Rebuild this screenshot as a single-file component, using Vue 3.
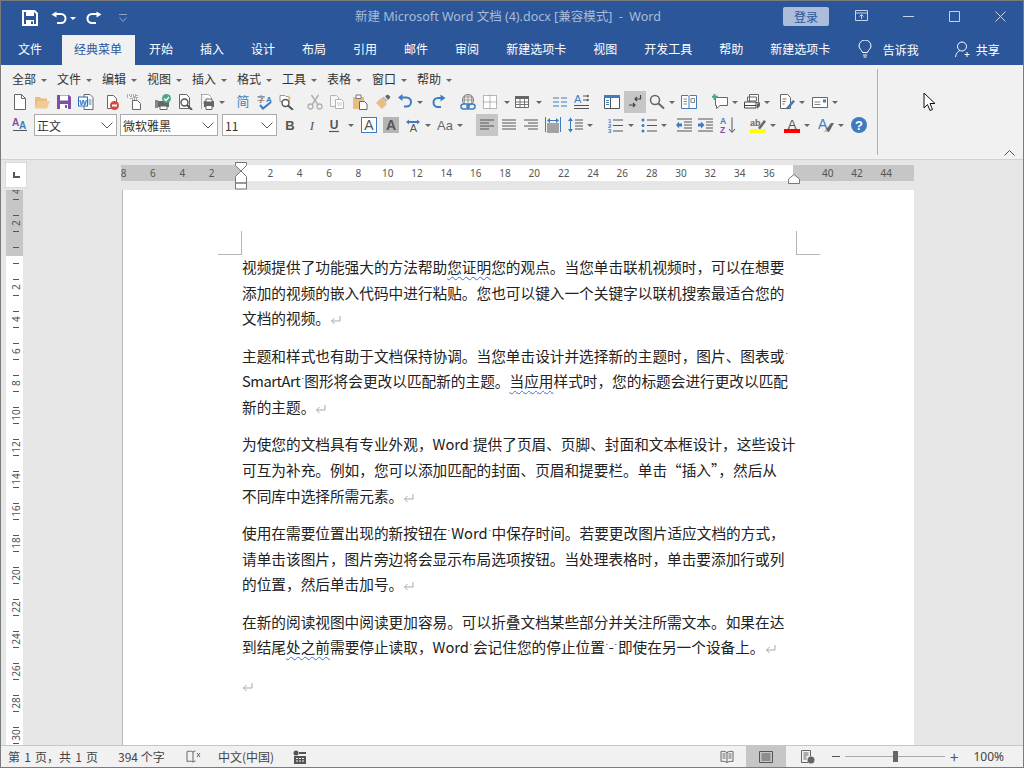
<template>
  <div class="app">
    <header class="titlebar">
      <div class="qat">
        <svg class="qat-save" width="16" height="16" viewBox="0 0 16 16">
          <path d="M1 1h11.500L15 3.500V15H1z" fill="none" stroke="#fff" stroke-width="2" />
          <path d="M4 1h8v5H4zM4 10h8v5H4z" fill="#fff" />
          <path d="M9 11.500h2V14H9z" fill="#2b579a" />
        </svg>
        <svg class="qat-undo" width="17" height="15" viewBox="0 0 17 15">
          <path d="M5 3h6a4.500 4.500 0 0 1 0 9H7" fill="none" stroke="#fff" stroke-width="2" />
          <path d="M6.500 .5v6L1.500 3.500z" fill="#fff" />
        </svg>
        <i class="qat-caret"></i>
        <svg class="qat-redo" width="17" height="15" viewBox="0 0 17 15">
          <path d="M12 3H6a4.500 4.500 0 0 0 0 9h4" fill="none" stroke="#fff" stroke-width="2" />
          <path d="M10.500 .5v6l5-3z" fill="#fff" />
        </svg>
        <svg class="qat-more" width="10" height="9" viewBox="0 0 10 9">
          <path d="M1 .5h8M1.500 3.500 5 7.500l3.500-4" fill="none" stroke="#8ea5c9" />
        </svg>
      </div>
      <div class="doc-title">新建 Microsoft Word 文档 (4).docx [兼容模式]&nbsp;&nbsp;-&nbsp;&nbsp;Word</div>
      <button class="login">登录</button>
      <div class="win-btns">
        <svg width="13" height="12" viewBox="0 0 13 12">
          <path d="M.5.5h12v10H.5zM.5 3h12M6.500 9V4.500M4.500 6.500l2-2 2 2" fill="none" stroke="#c7d2e5" />
        </svg>
        <svg width="11" height="11" viewBox="0 0 11 11"><path d="M0 5.500h11" stroke="#c7d2e5" /></svg>
        <svg width="11" height="11" viewBox="0 0 11 11"><path d="M.5.5h10v10H.5z" fill="none" stroke="#c7d2e5" /></svg>
        <svg width="11" height="11" viewBox="0 0 11 11"><path d="M.5.5l10 10M10.500.5l-10 10" stroke="#c7d2e5" /></svg>
      </div>
    </header>

    <nav class="tabs">
      <span
        v-for="tab in tabs"
        :key="tab.id"
        class="tab"
        :class="{ active: tab.active, file: tab.id === 0 }"
      >{{ tab.label }}</span>
      <svg class="bulb" width="14" height="18" viewBox="0 0 14 18">
        <path d="M4.500 12.500C4 10 1 9 1 6a6 6 0 0 1 12 0c0 3-3 4-3.500 6.500zM5 15h4M5.500 17h3" fill="none" stroke="#fff" />
      </svg>
      <span class="tell">告诉我</span>
      <svg class="person" width="17" height="17" viewBox="0 0 17 17">
        <circle cx="7" cy="5.500" r="4.500" fill="none" stroke="#fff" />
        <path d="M.5 16c.5-3.500 2.500-6 4.500-6.500M12 11v5M9.500 13.500h5" fill="none" stroke="#fff" />
      </svg>
      <span class="share">共享</span>
    </nav>

    <section class="ribbon">
      <div class="ribbon-main">
        <div class="menu-row">
          <span v-for="m in menus" :key="m" class="menu-item">{{ m }}<i class="caret"></i></span>
        </div>
        <div class="tool-row">
          <template v-for="(t, idx) in toolsTop" :key="idx">
            <i v-if="t.name === 'caret'" class="caret-slot" :style="gapStyle(t)"><i class="caret"></i></i>
            <span v-else class="tool" :class="{ on: t.on }" :style="gapStyle(t)">
              <svg width="16" height="16" viewBox="0 0 16 16" v-html="icons[t.name]"></svg>
            </span>
          </template>
        </div>
        <div class="tool-row">
          <span class="tool"><svg width="16" height="16" viewBox="0 0 16 16" v-html="icons.styles"></svg></span>
          <div class="combo style-combo"><span>正文</span><svg width="12" height="7" viewBox="0 0 12 7"><path d="M.5.5 6 6l5.500-5.500" fill="none" stroke="#555" /></svg></div>
          <div class="combo font-combo"><span>微软雅黑</span><svg width="12" height="7" viewBox="0 0 12 7"><path d="M.5.5 6 6l5.500-5.500" fill="none" stroke="#555" /></svg></div>
          <div class="combo size-combo"><span>11</span><svg width="12" height="7" viewBox="0 0 12 7"><path d="M.5.5 6 6l5.500-5.500" fill="none" stroke="#555" /></svg></div>
          <template v-for="(t, idx) in toolsBottom" :key="idx">
            <i v-if="t.name === 'caret'" class="caret-slot" :style="gapStyle(t)"><i class="caret"></i></i>
            <span v-else class="tool" :class="{ on: t.on }" :style="gapStyle(t)">
              <svg width="16" height="16" viewBox="0 0 16 16" v-html="icons[t.name]"></svg>
            </span>
          </template>
        </div>
      </div>
      <svg class="collapse" width="11" height="6" viewBox="0 0 11 6"><path d="M.5 5.500l5-5 5 5" fill="none" stroke="#555" /></svg>
      <svg class="cursor" width="13" height="20" viewBox="0 0 13 20">
        <path d="M1 1v15l3.500-3.500 2.500 6 2.500-1-2.500-6H12z" fill="#fff" stroke="#111" />
      </svg>
    </section>

    <main class="workspace">
      <div class="ruler-bar">
        <div class="corner"><i></i></div>
        <div class="h-ruler">
          <div class="h-gray left"></div>
          <div class="h-white"></div>
          <div class="h-gray right"></div>
          <span
            v-for="n in hLabels"
            :key="n.pos"
            class="h-num"
            :style="{ left: n.pos + 'px' }"
          >{{ n.text }}</span>
          <svg class="hourglass" width="12" height="28" viewBox="0 0 12 28">
            <path d="M.5.500h11v3L6 9 .5 3.500zM6 9l5.500 5.500V21H.5v-6.500zM.5 21h11v6H.5z" fill="#fff" stroke="#777" />
          </svg>
          <svg class="right-mark" width="12" height="10" viewBox="0 0 12 10">
            <path d="M6 .5l5.500 4.500v4.500H.5V5z" fill="#fff" stroke="#777" />
          </svg>
        </div>
      </div>

      <div class="doc-area">
        <div class="v-ruler">
          <div class="v-gray"></div>
          <i v-for="d in vDashes" :key="d" class="v-dash" :style="{ top: d + 'px' }"></i>
          <span
            v-for="n in vLabels"
            :key="n.pos"
            class="v-num"
            :style="{ top: n.pos + 'px' }"
          >{{ n.text }}</span>
        </div>

        <article class="page">
          <i class="crop tl"></i>
          <i class="crop tr"></i>
          <p>
            <span class="line">视频提供了功能强大的方法帮助<span class="squiggle">您证明</span>您的观点。当您单击联机视频时，可以在想要</span>
            <span class="line">添加的视频的嵌入代码中进行粘贴。您也可以键入一个关键字以联机搜索最适合您的</span>
            <span class="line">文档的视频。<svg class="ret" width="11" height="10" viewBox="0 0 11 10"><path d="M10 1v5H1.500M4.500 3 1.500 6l3 3" fill="none" stroke="#a9a9a9" /></svg></span>
          </p>
          <p>
            <span class="line">主题和样式也有助于文档保持协调。当您单击设计并选择新的主题时，图片、图表或<i class="sp"></i></span>
            <span class="line"><span class="tight">SmartArt</span><i class="sp"></i>图形将会更改以匹配新的主题。<span class="squiggle">当应用</span>样式时，您的标题会进行更改以匹配</span>
            <span class="line">新的主题。<svg class="ret" width="11" height="10" viewBox="0 0 11 10"><path d="M10 1v5H1.500M4.500 3 1.500 6l3 3" fill="none" stroke="#a9a9a9" /></svg></span>
          </p>
          <p>
            <span class="line">为使您的文档具有专业外观，Word<i class="sp"></i>提供了页眉、页脚、封面和文本框设计，这些设计</span>
            <span class="line">可互为补充。例如，您可以添加匹配的封面、页眉和提要栏。单击“插入”，然后从</span>
            <span class="line">不同库中选择所需元素。<svg class="ret" width="11" height="10" viewBox="0 0 11 10"><path d="M10 1v5H1.500M4.500 3 1.500 6l3 3" fill="none" stroke="#a9a9a9" /></svg></span>
          </p>
          <p>
            <span class="line">使用在需要位置出现的新按钮在<i class="sp"></i>Word<i class="sp"></i>中保存时间。若要更改图片适应文档的方式，</span>
            <span class="line">请单击该图片，图片旁边将会显示布局选项按钮。当处理表格时，单击要添加行或列</span>
            <span class="line">的位置，然后单击加号。<svg class="ret" width="11" height="10" viewBox="0 0 11 10"><path d="M10 1v5H1.500M4.500 3 1.500 6l3 3" fill="none" stroke="#a9a9a9" /></svg></span>
          </p>
          <p>
            <span class="line">在新的阅读视图中阅读更加容易。可以折叠文档某些部分并关注所需文本。如果在达</span>
            <span class="line">到结尾<span class="squiggle">处之前</span>需要停止读取，Word<i class="sp"></i>会记住您的停止位置<i class="sp"></i>-<i class="sp"></i>即使在另一个设备上。<svg class="ret" width="11" height="10" viewBox="0 0 11 10"><path d="M10 1v5H1.500M4.500 3 1.500 6l3 3" fill="none" stroke="#a9a9a9" /></svg></span>
          </p>
          <p>
            <span class="line"><svg class="ret" width="11" height="10" viewBox="0 0 11 10"><path d="M10 1v5H1.500M4.500 3 1.500 6l3 3" fill="none" stroke="#a9a9a9" /></svg></span>
          </p>
        </article>
      </div>
    </main>

    <footer class="statusbar">
      <span class="st-page">第 1 页，共 1 页</span>
      <span class="st-words">394 个字</span>
      <svg class="st-proof" width="15" height="14" viewBox="0 0 15 14">
        <path d="M7 2C5.500 1 3 1 1 1.500v10c2-.5 4.500-.5 6 .5 .7-.5 1.500-.8 2.500-1M7 2v10M7 2c.7-.5 1.500-.8 2.500-1M11 3l3 4M14 3l-3 4" fill="none" stroke="#666" />
      </svg>
      <span class="st-lang">中文(中国)</span>
      <svg class="st-macro" width="13" height="14" viewBox="0 0 13 14">
        <circle cx="3" cy="3" r="2.500" fill="#555" />
        <path d="M6 2h7v2H6zM1 6h12v8H1z" fill="#555" />
        <path d="M3 8h2v1H3zM6 8h2v1H6zM9 8h2v1H9zM3 10.500h2v1H3zM6 10.500h2v1H6zM9 10.500h2v1H9z" fill="#f1f1f1" />
      </svg>
      <div class="st-right">
        <svg width="14" height="14" viewBox="0 0 14 14">
          <path d="M7 2.500C5.500 1.500 3 1 1 1.500v10c2-.5 4.500 0 6 1 1.500-1 4-1.500 6-1v-10c-2-.5-4.500 0-6 1zM7 2.500v10M2.500 4h3M2.500 6h3M2.500 8h3M8.500 4h3M8.500 6h3M8.500 8h3" fill="none" stroke="#666" />
        </svg>
        <span class="view-on">
          <svg width="14" height="12" viewBox="0 0 14 12">
            <path d="M.5.500h13v11H.5zM2.500 3h9M2.500 5h9M2.500 7h9M2.500 9h9" fill="none" stroke="#555" />
          </svg>
        </span>
        <svg class="view-web" width="15" height="14" viewBox="0 0 15 14">
          <path d="M8 12.500H1.500V.5h9v6M3.500 3h5M3.500 5h5M3.500 7h3M3.500 9h3" fill="none" stroke="#666" />
          <circle cx="11" cy="10" r="3.500" fill="#666" />
        </svg>
        <span class="zoom-minus"></span>
        <div class="slider"><i></i></div>
        <span class="zoom-plus">+</span>
        <span class="zoom-val">100%</span>
      </div>
    </footer>
  </div>
</template>

<script setup>
const tabs = ['文件', '经典菜单', '开始', '插入', '设计', '布局', '引用', '邮件', '审阅', '新建选项卡', '视图', '开发工具', '帮助', '新建选项卡'].map(
  (label, id) => ({ id, label, active: id === 1 }),
)

const menus = ['全部', '文件', '编辑', '视图', '插入', '格式', '工具', '表格', '窗口', '帮助']

// "name:gap", a trailing * marks the pressed button
function parseTools(list) {
  return list.map((entry) => {
    const on = entry.endsWith('*')
    const [name, gap] = entry.replace('*', '').split(':')
    return { name, gap: Number(gap || 0), on }
  })
}

function gapStyle(t) {
  return t.gap ? { marginLeft: t.gap + 'px' } : null
}

const toolsTop = parseTools([
  'new', 'open', 'save', 'word', 'perm:4', 'sheet', 'printok:7', 'preview', 'print', 'caret',
  'simp:6', 'spell', 'research', 'cut:6', 'copy', 'paste:1', 'painter:1', 'undo', 'caret', 'redo:4',
  'link:7', 'border', 'caret:2', 'table', 'caret:2', 'columns:6', 'textdir', 'docmap:8', 'para:1*',
  'search', 'caret', 'book:2', 'comment:9', 'caret', 'pages:2', 'caret', 'track:5', 'caret', 'envelope:3', 'caret',
])

const toolsBottom = parseTools([
  'bold:2', 'italic', 'under', 'caret:2', 'fontbox:3', 'shade', 'phon', 'caret', 'case:2', 'caret',
  'left:12*', 'center', 'right', 'dist', 'spacing', 'caret', 'num:11', 'caret', 'bullets:3', 'caret',
  'outdent:5', 'indent', 'sort', 'hl:8', 'caret', 'color:4', 'caret', 'fstyle:4', 'caret', 'help:3',
])

const hLabels = []
for (const n of [8, 6, 4, 2]) hLabels.push({ text: n, pos: 120 - n * 14.667 })
for (let n = 2; n <= 44; n += 2) {
  if (n !== 38) hLabels.push({ text: n, pos: 120 + n * 14.667 })
}

const vLabels = [{ text: 4, pos: 1 }, { text: 2, pos: 33 }]
for (let n = 2; n <= 30; n += 2) vLabels.push({ text: n, pos: 97 + (n - 2) * 16 })

const vDashes = []
for (let y = 9; y < 555; y += 16) vDashes.push(y)

const BLUE = '#3f7cbf'
const TAN = '#e9bd7f'
const SANS = 'font-family="Liberation Sans, sans-serif"'

const icons = {
  new: '<path d="M2.500.5h7l4 4v11h-11z" fill="#fff" stroke="#666"/><path d="M9.500.5v4h4" fill="none" stroke="#666"/>',
  open: `<path d="M1 3h5l1 1.500h6V7H4.500L1 14z" fill="${TAN}"/><path d="M4 7h12l-3 7.500H.5z" fill="#f0cc94"/>`,
  save: '<path d="M1 1h12l2 2v12H1z" fill="#7e4fa6"/><path d="M4 1.500h8v5H4zM4 10h8v5H4z" fill="#fff"/><path d="M9 11h2v3H9z" fill="#7e4fa6"/>',
  word: `<path d="M6 .5h6l3 3v12H6z" fill="#fff" stroke="#666"/><rect x=".5" y="3" width="9" height="9" fill="#fff" stroke="#2a6bbd"/><text x="5" y="10.500" text-anchor="middle" font-size="8" font-weight="700" fill="#2a6bbd" ${SANS}>W</text><path d="M10.500 6h3M10.500 8h3M10.500 10h3" stroke="#3f7cbf"/>`,
  perm: '<path d="M3.500 1.500h6l3 3v10h-9z" fill="#fff" stroke="#666"/><circle cx="10.500" cy="11.500" r="4.500" fill="#d24a3a"/><path d="M8 10.500h5v2H8z" fill="#fff"/>',
  sheet: '<path d="M1 1h3M1 3h1M5 1h6v4H5z" fill="none" stroke="#666" stroke-dasharray="1 1"/><path d="M6.500 6.500h5l3 3v6h-8z" fill="#fff" stroke="#666"/><path d="M7 3h3" stroke="#3f7cbf"/>',
  printok: '<path d="M3 7h11v6H3z" fill="#666"/><path d="M0 6h3v8H0z" fill="#888"/><path d="M5 12h7v3.500H5z" fill="#fff" stroke="#666"/><circle cx="11.500" cy="4.500" r="4.500" fill="#4fa58c"/><path d="M9 4.500l2 2 3-3.500" fill="none" stroke="#fff" stroke-width="1.200"/>',
  preview: '<path d="M2.500.5h7l3 3v11h-10z" fill="#fff" stroke="#666"/><circle cx="7.500" cy="8.500" r="3.500" fill="#fff" stroke="#555" stroke-width="1.400"/><path d="M10 11l5 5" stroke="#555" stroke-width="2"/>',
  print: '<path d="M2.500.5h7l3 3V7M2.500.5V15" fill="#fff" stroke="#666" stroke-dasharray="1 1"/><path d="M5 7h10v6H5z" fill="#666"/><path d="M7 5h6v3H7z" fill="#fff" stroke="#666"/><path d="M7 11.500h6v4H7z" fill="#fff" stroke="#666"/><circle cx="5" cy="9" r=".7" fill="#3f7cbf"/>',
  simp: '<text x="8" y="12" text-anchor="middle" font-size="13" fill="#3f7cbf" font-family="Noto Sans CJK SC, sans-serif">简</text>',
  spell: `<text x="0" y="8" font-size="8" fill="#555" font-family="Noto Sans CJK SC, sans-serif">字</text><text x="9" y="8" font-size="8" font-weight="700" fill="#3f7cbf" ${SANS}>A</text><path d="M3 11l3 3.500L14 8" fill="none" stroke="#3f7cbf" stroke-width="2"/>`,
  research: `<path d="M1 1.500h5l1 1 3 0 0 5H1z" fill="#fff" stroke="#999"/><path d="M9 1l3 3-2 2z" fill="${TAN}"/><circle cx="6.500" cy="9" r="3.500" fill="#fff" stroke="#555" stroke-width="1.400"/><path d="M9 11.500l5 4.500" stroke="#555" stroke-width="2"/>`,
  cut: '<path d="M4.500 1l6 9M11.500 1l-6 9" stroke="#b0b0b0" stroke-width="1.500" fill="none"/><circle cx="3.500" cy="12.500" r="2.500" fill="none" stroke="#b0b0b0" stroke-width="1.300"/><circle cx="12.500" cy="12.500" r="2.500" fill="none" stroke="#b0b0b0" stroke-width="1.300"/>',
  copy: '<path d="M1.500 1.500h6l2 2v9h-8z" fill="#f6f6f6" stroke="#b5b5b5"/><path d="M6.500 5.500h6l2 2v7h-8z" fill="#fff" stroke="#b5b5b5"/><path d="M8 9h5M8 11h5" stroke="#c8c8c8"/>',
  paste: `<path d="M1 3h11v12H1z" fill="${TAN}"/><path d="M4 1h5v3.500H4z" fill="#fff" stroke="#777"/><path d="M7.500 7.500h5l2.500 2.500v5.500H7.500z" fill="#fff" stroke="#666"/>`,
  painter: `<path d="M1 9l5-5 6 6-5 5z" fill="${TAN}"/><path d="M6.500 4.500l2-2 4 4-1.500 2z" fill="#bbb"/><path d="M10 2l3-1.500 2.500 2.500-2.500 3z" fill="#666"/>`,
  undo: `<path d="M4 3.500h5.500a4.500 4.500 0 0 1 0 9H7" fill="none" stroke="${BLUE}" stroke-width="2"/><path d="M5.500 0v7L1 3.500z" fill="${BLUE}"/>`,
  redo: `<path d="M11 4H7a4.500 4.500 0 0 0 0 9h3" fill="none" stroke="${BLUE}" stroke-width="2"/><path d="M9.500 .5v7l5-3.500z" fill="${BLUE}"/>`,
  link: `<circle cx="8" cy="6" r="5.500" fill="none" stroke="#777"/><path d="M2.500 6h11M8 .5v11M3.500 3h9M5 1.500c-1 3-1 6 0 9M11 1.500c1 3 1 6 0 9" fill="none" stroke="#777" stroke-width=".7"/><rect x="1" y="10" width="8" height="5" rx="2.500" fill="#f1f1f1" stroke="${BLUE}" stroke-width="1.500"/><rect x="7" y="10" width="8" height="5" rx="2.500" fill="none" stroke="${BLUE}" stroke-width="1.500"/>`,
  border: '<path d="M1.500 1.500h13v13h-13zM8 1.500v13M1.500 8h13" fill="#fff" stroke="#777" stroke-dasharray="1 1"/>',
  table: '<path d="M1.500 2.500h13v11h-13z" fill="#fff" stroke="#666"/><path d="M1 2h14v3H1z" fill="#666"/><path d="M6 5v8M10.500 5v8M1.500 8h13M1.500 10.500h13" stroke="#777"/>',
  columns: `<path d="M1 4h6M1 8h6M1 12h6M9 4h6M9 8h6M9 12h6" stroke="${BLUE}" stroke-width="1.200"/>`,
  textdir: `<text x="0" y="9" font-size="11" fill="${BLUE}" ${SANS}>A</text><path d="M0 11.500h15M0 14.500h15" stroke="#555"/><path d="M9 2h6M9 6h6" stroke="#555"/><path d="M13 .5l2 1.500-2 1.500zM13 4.500l2 1.500-2 1.500z" fill="#555"/>`,
  docmap: `<path d="M.5 1.500h15v13H.5z" fill="#fff" stroke="#555"/><path d="M0 1h16v3H0z" fill="${BLUE}"/><path d="M6.500 4v10" stroke="#555"/><path d="M2 6.500h3M2 8.500h3M2 10.500h3" stroke="${BLUE}"/>`,
  para: '<path d="M13.500 1v4H8M10 3 8 5l2 2M2 11h6M6 9l2 2-2 2" fill="none" stroke="#444" stroke-width="1.200"/>',
  search: '<circle cx="6" cy="6" r="4.500" fill="none" stroke="#666" stroke-width="1.500"/><path d="M9.500 9.500l5.500 5" stroke="#666" stroke-width="2"/>',
  book: `<path d="M.5 1.500h6.500l1 1 1-1h6.500v13H.5z" fill="#fff" stroke="${BLUE}"/><path d="M8 2.500v12" stroke="${BLUE}"/><path d="M2.500 5h3.500M2.500 7.500h3.500M2.500 10h3.500" stroke="#888"/><path d="M10 4.500h3.500v4H10z" fill="none" stroke="#888"/>`,
  comment: '<path d="M3.500 3.500h12v8H8l-3.500 3v-3H3.500z" fill="#fff" stroke="#666"/><path d="M2.500 0v6M0 2.800h6" stroke="#4fa58c" stroke-width="2"/>',
  pages: '<path d="M5.500 .5h9v8h-9zM3.500 3h9v4h-9z" fill="#fff" stroke="#666"/><path d="M.5 8h11.500v6H.5z" fill="#fff" stroke="#444"/><path d="M.5 11.500h11.500" stroke="#444"/><path d="M13 10l3-2v4l-3 3z" fill="#666"/>',
  track: `<path d="M1.500 .5h7l3 3v11h-10z" fill="#fff" stroke="#666"/><path d="M3.500 5h4M3.500 7.500h3M3.500 10h2" stroke="#d0553e"/><path d="M7 14l7-8 2 1.500-7 8z" fill="${BLUE}"/>`,
  envelope: `<path d="M.5 3.500h15v10H.5z" fill="#fff" stroke="#666"/><path d="M2.500 8h6M2.500 10.500h6" stroke="#888"/><rect x="11" y="5.500" width="3" height="3" fill="${BLUE}"/>`,
  styles: `<text x="0" y="9" font-size="10" font-weight="700" fill="#7e4fa6" ${SANS}>A</text><text x="7" y="12" font-size="10" font-weight="700" fill="${BLUE}" ${SANS}>A</text><path d="M1 13.500h14" stroke="#555"/>`,
  bold: `<text x="8" y="13" text-anchor="middle" font-size="13" font-weight="700" fill="#555" ${SANS}>B</text>`,
  italic: '<text x="8" y="13" text-anchor="middle" font-size="13" font-style="italic" fill="#555" font-family="Liberation Serif, serif">I</text>',
  under: `<text x="8" y="12" text-anchor="middle" font-size="12" font-weight="700" fill="#555" ${SANS}>U</text><path d="M3 14.500h10" stroke="#555" stroke-width="1.200"/>`,
  fontbox: `<rect x=".5" y=".5" width="15" height="15" fill="#fff" stroke="${BLUE}"/><text x="8" y="13" text-anchor="middle" font-size="14" fill="#555" ${SANS}>A</text>`,
  shade: `<rect x="0" y="0" width="16" height="16" fill="#b5b5b5"/><text x="8" y="13" text-anchor="middle" font-size="14" font-weight="700" fill="#555" ${SANS}>A</text>`,
  phon: `<text x="8.500" y="15" text-anchor="middle" font-size="11" fill="#555" ${SANS}>A</text><path d="M1 5l3-2.500V4c3 0 5 0 8 0V2.500L15 5l-3 2.500V6H4v1.500z" fill="${BLUE}"/>`,
  case: `<text x="8" y="13" text-anchor="middle" font-size="13" fill="#666" ${SANS}>Aa</text>`,
  left: '<path d="M1 3h14M1 6h9M1 9h14M1 12h9" stroke="#555"/>',
  center: '<path d="M1 3h14M1 6h14M1 9h14M1 12h14" stroke="#555"/>',
  right: '<path d="M1 3h14M5 6h10M1 9h14M5 12h10" stroke="#555"/>',
  dist: `<path d="M.5 0v15M15.500 0v15" stroke="${BLUE}"/><path d="M3 3.500h10" stroke="${BLUE}"/><path d="M5 1v5L2 3.500zM11 1v5l3-2.500z" fill="${BLUE}"/><path d="M2 7h12M2 9h12M2 11h12M2 13h12M2 15h12" stroke="#555"/>`,
  spacing: `<path d="M3.500 2v12" stroke="${BLUE}"/><path d="M1 4l2.500-3.500L6 4zM1 12l2.500 3.500L6 12z" fill="${BLUE}"/><path d="M8 3h8M8 6h8M8 9h8M8 12h8" stroke="#555"/>`,
  num: `<text x="0" y="5.500" font-size="6" font-weight="700" fill="${BLUE}" ${SANS}>1</text><text x="0" y="11" font-size="6" font-weight="700" fill="${BLUE}" ${SANS}>2</text><text x="0" y="16" font-size="6" font-weight="700" fill="${BLUE}" ${SANS}>3</text><path d="M5 3h10M5 8.500h10M5 14h10" stroke="#555"/>`,
  bullets: `<circle cx="2" cy="3" r="1.500" fill="${BLUE}"/><circle cx="2" cy="8.500" r="1.500" fill="${BLUE}"/><circle cx="2" cy="14" r="1.500" fill="${BLUE}"/><path d="M6 3h10M6 8.500h10M6 14h10" stroke="#555"/>`,
  outdent: `<path d="M1 2h15M8 5h8M8 8h8M8 11h8M1 14h15" stroke="#555"/><path d="M6 6.500H3v-2L0 8l3 3.500v-2h3z" fill="${BLUE}"/>`,
  indent: `<path d="M0 2h15M8 5h7M8 8h7M8 11h7M0 14h15" stroke="#555"/><path d="M0 6.500h3v-2L6.500 8 3 11.500v-2H0z" fill="${BLUE}"/>`,
  sort: `<text x="0" y="7" font-size="8.500" font-weight="700" fill="${BLUE}" ${SANS}>A</text><text x="0" y="15.500" font-size="8.500" font-weight="700" fill="#7e4fa6" ${SANS}>Z</text><path d="M12 .5V15M9 12l3 3.500 3-3.500" fill="none" stroke="#555"/>`,
  hl: `<text x="0" y="8.500" font-size="9" font-weight="700" fill="#666" ${SANS}>ab</text><path d="M8 11l6-8 2 1.500-6 8z" fill="#666"/><rect x="0" y="12" width="16" height="4" fill="#ff0"/>`,
  color: `<text x="8" y="11.500" text-anchor="middle" font-size="13" fill="#555" ${SANS}>A</text><rect x="0" y="12" width="16" height="4" fill="#f00"/>`,
  fstyle: `<text x="0" y="12" font-size="14" fill="${BLUE}" ${SANS}>A</text><path d="M7 14l6-8 3 0-5 9z" fill="#666"/><path d="M5 15.500l3-3 2 2z" fill="${TAN}"/>`,
  help: `<circle cx="8" cy="8" r="8" fill="${BLUE}"/><text x="8" y="12.500" text-anchor="middle" font-size="13" font-weight="700" fill="#fff" ${SANS}>?</text>`,
}
</script>

<style scoped>
.app {
  position: relative;
  width: 1024px;
  height: 768px;
  box-sizing: border-box;
  border: 1px solid #7b7b7b;
  display: flex;
  flex-direction: column;
  overflow: hidden;
  font-family: "Noto Sans CJK SC", "Noto Sans", sans-serif;
  color: #444;
}

/* Title bar */
.titlebar {
  height: 34px;
  flex: none;
  background: #2b579a;
  display: flex;
  align-items: center;
}

.qat {
  width: 354px;
  display: flex;
  align-items: center;
  padding-left: 21px;
  box-sizing: border-box;
}

.qat-undo {
  margin-left: 12px;
}

.qat-caret {
  width: 0;
  height: 0;
  margin-left: 3px;
  border: 3px solid transparent;
  border-top-color: #fff;
  border-bottom: none;
}

.qat-redo {
  margin-left: 10px;
}

.qat-more {
  margin-left: 15px;
}

.doc-title {
  width: 428px;
  margin-top: -6px;
  color: #a9bbd7;
  font-family: "Noto Sans", "Noto Sans CJK SC", sans-serif;
  font-size: 12.5px;
  white-space: nowrap;
}

.login {
  width: 46px;
  height: 19px;
  margin-top: -3px;
  padding: 0;
  border: none;
  border-radius: 2px;
  background: #abbdd9;
  color: #2b579a;
  font: 12px "Noto Sans CJK SC", sans-serif;
}

.win-btns {
  display: flex;
  align-items: center;
  gap: 35px;
  margin-left: 26px;
  margin-top: -4px;
}

/* Tabs */
.tabs {
  height: 30px;
  flex: none;
  background: #2b579a;
  display: flex;
  align-items: center;
  color: #fff;
  font-size: 12px;
  white-space: nowrap;
}

.tab {
  padding: 0 13.5px 2px;
  line-height: 28px;
}

.tab.file {
  margin: 0 6.5px 0 3.5px;
}

.tab.active {
  background: #f1f1f1;
  color: #2b579a;
  padding: 0 12px 2px;
  margin: 0 0.5px 0 0;
  width: 49px;
}

.bulb {
  margin-left: 14px;
  margin-top: -2px;
}

.tell {
  margin-left: 11px;
  margin-top: -2px;
}

.person {
  margin-left: 36px;
  margin-top: -2px;
}

.share {
  margin-left: 4px;
  margin-top: -2px;
}

/* Ribbon */
.ribbon {
  height: 95px;
  flex: none;
  box-sizing: border-box;
  background: #f1f1f1;
  border-bottom: 1px solid #d2d2d2;
  padding-top: 4px;
  position: relative;
}

.ribbon-main {
  width: 877px;
  height: 86px;
  box-sizing: border-box;
  border-right: 1px solid #b1b1b1;
}

.menu-row {
  height: 22px;
  box-sizing: border-box;
  padding: 0 0 4px 11px;
  display: flex;
  align-items: center;
  font-size: 12px;
  color: #333;
}

.menu-item {
  width: 45px;
  flex: none;
  white-space: nowrap;
}

.caret {
  display: inline-block;
  width: 0;
  height: 0;
  margin-left: 5px;
  border: 3px solid transparent;
  border-top-color: #666;
  border-bottom: none;
  vertical-align: middle;
}

.tool-row {
  height: 22px;
  margin-bottom: 1px;
  display: flex;
  align-items: center;
  padding-left: 8px;
}

.tool {
  width: 22px;
  height: 22px;
  flex: none;
  display: flex;
  align-items: center;
  justify-content: center;
}

.tool.on {
  background: #c6c6c6;
}

.caret-slot {
  width: 8px;
  height: 22px;
  flex: none;
  display: flex;
  align-items: center;
  justify-content: center;
}

.caret-slot .caret {
  margin: 0;
}

.combo {
  height: 22px;
  flex: none;
  box-sizing: border-box;
  border: 1px solid #ababab;
  background: #fff;
  display: flex;
  align-items: center;
  justify-content: space-between;
  padding: 0 3px 0 2px;
  font-size: 12px;
  color: #333;
}

.style-combo {
  width: 83px;
  margin-left: 3px;
}

.font-combo {
  width: 98px;
  margin-left: 3px;
}

.size-combo {
  width: 55px;
  margin-left: 4px;
}

.collapse {
  position: absolute;
  right: 8px;
  top: 85px;
}

.cursor {
  position: absolute;
  left: 922px;
  top: 27px;
}

/* Rulers and page */
.workspace {
  flex: 1;
  min-height: 0;
  background: #e6e6e6;
  display: flex;
  flex-direction: column;
}

.ruler-bar {
  height: 30px;
  flex: none;
  display: flex;
}

.corner {
  width: 20px;
  height: 24px;
  margin: 3px 0 0 5px;
  background: #fff;
  outline: 1px dotted #cfcfcf;
  display: flex;
  align-items: center;
  justify-content: center;
  flex: none;
}

.corner i {
  width: 5px;
  height: 4px;
  border-left: 2px solid #555;
  border-bottom: 2px solid #555;
}

.h-ruler {
  position: relative;
  width: 793px;
  height: 16px;
  margin: 5px 0 0 95px;
  display: flex;
  font-family: "Noto Sans", sans-serif;
}

.h-gray {
  background: #c6c6c6;
}

.h-gray.left {
  width: 120px;
}

.h-gray.right {
  width: 121px;
}

.h-white {
  width: 552px;
  background: #fff;
}

.h-num {
  position: absolute;
  top: 0;
  width: 20px;
  margin-left: -10px;
  text-align: center;
  font-size: 10px;
  line-height: 16px;
  color: #555;
}

.hourglass {
  position: absolute;
  left: 114px;
  top: -3px;
}

.right-mark {
  position: absolute;
  left: 667px;
  top: 9px;
}

.doc-area {
  flex: 1;
  min-height: 0;
  display: flex;
}

.v-ruler {
  position: relative;
  width: 17px;
  margin-left: 5px;
  background: #fff;
  overflow: hidden;
  flex: none;
  font-family: "Noto Sans", sans-serif;
}

.v-gray {
  height: 66px;
  background: #c6c6c6;
}

.v-dash {
  position: absolute;
  left: 7px;
  width: 6px;
  height: 1px;
  background: #555;
}

.v-num {
  position: absolute;
  left: 0;
  width: 20px;
  margin: -6px 0 0 0;
  line-height: 12px;
  text-align: center;
  font-size: 10px;
  color: #555;
  transform: rotate(-90deg);
  transform-origin: 10px 6px;
}

.page {
  position: relative;
  width: 792px;
  margin-left: 99px;
  flex: none;
  box-sizing: border-box;
  background: #fff;
  border-left: 1px solid #b9b9b9;
  padding: 64px 0 0 119px;
  overflow: hidden;
  font-size: 14.67px;
  color: #222;
}

.page p {
  margin: 0 0 11.7px;
}

.line {
  display: block;
  height: 25.67px;
  line-height: 25.67px;
  white-space: nowrap;
}

.squiggle {
  text-decoration: underline wavy #3b6fd4;
  text-decoration-thickness: 1px;
  text-underline-offset: 3px;
}

.tight {
  letter-spacing: -0.45px;
}

/* space mark: a small dot, not a character */
.sp {
  display: inline-block;
  width: 4px;
  height: 1px;
  background: linear-gradient(#777, #777) center / 1.5px 1px no-repeat;
  vertical-align: 8px;
}

.ret {
  vertical-align: -1px;
}

.crop {
  position: absolute;
  width: 23px;
  height: 23px;
  top: 41px;
  border-bottom: 1px solid #b5b5b5;
}

.crop.tl {
  left: 95px;
  border-right: 1px solid #b5b5b5;
}

.crop.tr {
  left: 673px;
  border-left: 1px solid #b5b5b5;
}

/* Status bar */
.statusbar {
  height: 22px;
  flex: none;
  box-sizing: border-box;
  background: #f1f1f1;
  border-top: 1px solid #c6c6c6;
  display: flex;
  align-items: center;
  font-size: 12px;
  color: #444;
  white-space: nowrap;
}

.st-page {
  margin-left: 7px;
  width: 110px;
  word-spacing: 1.5px;
}

.st-words {
  width: 68px;
}

.st-proof {
  flex: none;
  margin-right: 17px;
}

.st-lang {
  width: 75px;
}

.st-right {
  margin-left: auto;
  display: flex;
  align-items: center;
  height: 21px;
}

.view-on {
  width: 40px;
  height: 21px;
  margin-left: 12px;
  background: #c6c6c6;
  display: flex;
  align-items: center;
  justify-content: center;
}

.view-web {
  margin-left: 14px;
}

.zoom-minus {
  width: 8px;
  height: 1px;
  margin-left: 17px;
  background: #555;
}

.slider {
  position: relative;
  width: 100px;
  height: 1px;
  margin-left: 5px;
  background: #aaa;
}

.slider i {
  position: absolute;
  left: 48px;
  top: -5px;
  width: 5px;
  height: 11px;
  background: #666;
}

.zoom-plus {
  margin-left: 5px;
  font-size: 15px;
  line-height: 1;
  color: #555;
}

.zoom-val {
  margin: 0 19px 0 15px;
  font-family: "Noto Sans", sans-serif;
}
</style>

<style>
html,
body {
  margin: 0;
  background: #fff;
}
</style>
